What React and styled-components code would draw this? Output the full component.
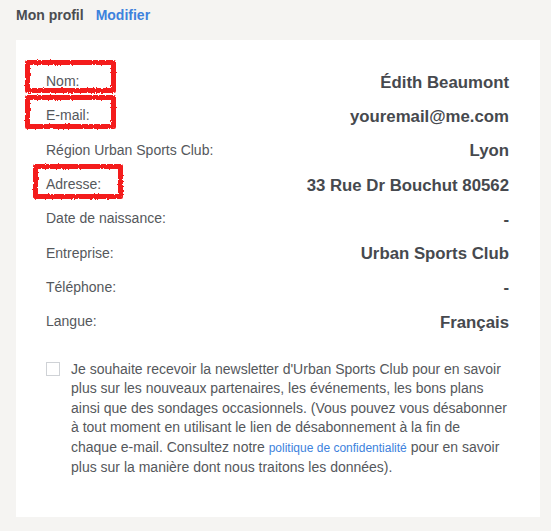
import React from "react";
import styled, { createGlobalStyle } from "styled-components";

const Global = createGlobalStyle`
  html, body { margin: 0; padding: 0; background: #f5f4f2; }
  body { font-family: "Liberation Sans", Arial, sans-serif; color: #4a4d52; }
`;

const Page = styled.div`
  padding: 7px 11px 16px 16px;
  width: 551px;
  box-sizing: border-box;
`;

const Header = styled.div`
  display: flex;
  align-items: baseline;
  gap: 12px;
  height: 33px;
`;

const Title = styled.span`
  font-size: 14px;
  font-weight: bold;
  color: #4a4c50;
`;

const EditLink = styled.a`
  font-size: 14px;
  font-weight: bold;
  color: #3d82dd;
  text-decoration: none;
`;

const Card = styled.div`
  background: #fff;
  padding: 25.5px 31px 40px 30px;
`;

const Rows = styled.div`
  display: flex;
  flex-direction: column;
`;

const Row = styled.div`
  display: flex;
  justify-content: space-between;
  align-items: center;
  height: 34.3px;
`;

const Label = styled.span`
  position: relative;
  font-size: 14px;
  color: #55585c;
  margin-top: -3px;
`;

const Value = styled.span`
  font-size: 16.8px;
  font-weight: bold;
  color: #46494e;
`;

const Marker = styled.span`
  position: absolute;
  left: ${(p) => p.$l}px;
  width: ${(p) => p.$w}px;
  top: ${(p) => p.$t}px;
  height: ${(p) => p.$h}px;
  box-sizing: border-box;
  border: 5px solid #f41d1d;
  border-radius: 2px;
  filter: url(#rough);
  pointer-events: none;
`;

const Consent = styled.label`
  display: flex;
  gap: 11px;
  margin-top: 20px;
`;

const Box = styled.span`
  flex: none;
  width: 12px;
  height: 12px;
  border: 1px solid #cfd2d6;
  margin-top: 2px;
`;

const Text = styled.p`
  margin: 0;
  font-size: 14px;
  line-height: 19.4px;
  color: #55585c;
`;

const Policy = styled.a`
  font-size: 12px;
  color: #3d82dd;
  text-decoration: none;
`;

const rows = [
  { label: "Nom:", value: "Édith Beaumont", mark: { l: -21, w: 91, t: -13, h: 33 } },
  { label: "E-mail:", value: "youremail@me.com", mark: { l: -21, w: 91, t: -12, h: 34 } },
  { label: "Région Urban Sports Club:", value: "Lyon" },
  { label: "Adresse:", value: "33 Rue Dr Bouchut 80562", mark: { l: -13, w: 90, t: -12, h: 35 } },
  { label: "Date de naissance:", value: "-" },
  { label: "Entreprise:", value: "Urban Sports Club" },
  { label: "Téléphone:", value: "-" },
  { label: "Langue:", value: "Français" },
];

export default function App() {
  return (
    <>
      <Global />
      <svg width="0" height="0" style={{ position: "absolute" }}>
        <filter id="rough">
          <feTurbulence type="fractalNoise" baseFrequency="0.6" numOctaves="2" result="n" />
          <feDisplacementMap in="SourceGraphic" in2="n" scale="3" />
        </filter>
      </svg>
      <Page>
        <Header>
          <Title>Mon profil</Title>
          <EditLink href="#">Modifier</EditLink>
        </Header>
        <Card>
          <Rows>
            {rows.map((r) => (
              <Row key={r.label}>
                <Label>
                  {r.label}
                  {r.mark && <Marker $l={r.mark.l} $w={r.mark.w} $t={r.mark.t} $h={r.mark.h} />}
                </Label>
                <Value>{r.value}</Value>
              </Row>
            ))}
          </Rows>
          <Consent>
            <Box />
            <Text>
              Je souhaite recevoir la newsletter d'Urban Sports Club pour en savoir plus sur les
              nouveaux partenaires, les événements, les bons plans ainsi que des sondages
              occasionnels. (Vous pouvez vous désabonner à tout moment en utilisant le lien de
              désabonnement à la fin de chaque e-mail. Consultez notre{" "}
              <Policy href="#">politique de confidentialité</Policy> pour en savoir plus sur la
              manière dont nous traitons les données).
            </Text>
          </Consent>
        </Card>
      </Page>
    </>
  );
}
